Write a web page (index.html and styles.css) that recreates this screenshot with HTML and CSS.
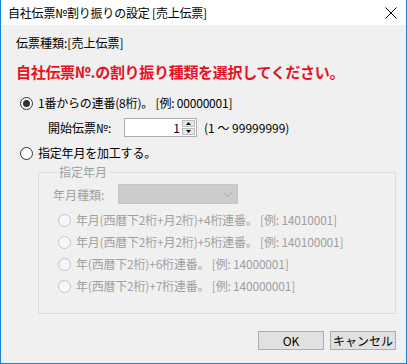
FILE: index.html
```html
<!DOCTYPE html>
<html>
<head>
	<title>自社伝票№割り振りの設定</title>
	<link rel="stylesheet" href="styles.css">
</head>
<body>
	<div class="window">
		<div class="titlebar">
			<span class="title">自社伝票№割り振りの設定 [売上伝票]</span>
			<svg class="close" width="12" height="12" viewBox="0 0 12 12">
				<path d="M0.5 0.5 L11.5 11.5 M11.5 0.5 L0.5 11.5" stroke="#000" stroke-width="1" fill="none"/>
			</svg>
		</div>
		<div class="content">
			<div class="kind">伝票種類:[売上伝票]</div>
			<div class="headline">自社伝票№.の割り振り種類を選択してください。</div>

			<label class="radio-row first">
				<span class="radio checked"></span>
				<span>1番からの連番(8桁)。 [例: 00000001]</span>
			</label>

			<div class="start-row">
				<span class="start-label">開始伝票№:</span>
				<div class="spin">
					<span class="spin-value">1</span>
					<span class="spin-buttons">
						<span class="spin-btn"><svg width="7" height="4" viewBox="0 0 7 4"><path d="M0 4 L3.5 0 L7 4 Z" fill="#000"/></svg></span>
						<span class="spin-btn"><svg width="7" height="4" viewBox="0 0 7 4"><path d="M0 0 L3.5 4 L7 0 Z" fill="#000"/></svg></span>
					</span>
				</div>
				<span class="range">(1 ～ 99999999)</span>
			</div>

			<label class="radio-row second">
				<span class="radio"></span>
				<span>指定年月を加工する。</span>
			</label>

			<fieldset class="group">
				<legend>指定年月</legend>
				<div class="combo-row">
					<span class="combo-label">年月種類:</span>
					<div class="combo">
						<svg width="9" height="5" viewBox="0 0 9 5"><path d="M0.5 0.5 L4.5 4.5 L8.5 0.5" stroke="#aaaaaa" fill="none"/></svg>
					</div>
				</div>
				<label class="radio-row disabled"><span class="radio"></span><span>年月(西暦下2桁+月2桁)+4桁連番。 [例: 14010001]</span></label>
				<label class="radio-row disabled"><span class="radio"></span><span>年月(西暦下2桁+月2桁)+5桁連番。 [例: 140100001]</span></label>
				<label class="radio-row disabled"><span class="radio"></span><span>年(西暦下2桁)+6桁連番。 [例: 14000001]</span></label>
				<label class="radio-row disabled"><span class="radio"></span><span>年(西暦下2桁)+7桁連番。 [例: 140000001]</span></label>
			</fieldset>

			<div class="buttons">
				<button class="btn">OK</button>
				<button class="btn">キャンセル</button>
			</div>
		</div>
	</div>
</body>
</html>
```

FILE: styles.css
```css
html, body {
	margin: 0;
	padding: 0;
	background: #f0f0f0;
}
.window {
	width: 407px;
	height: 364px;
	box-sizing: border-box;
	border: 1px solid #1883d7;
	border-top: none;
	background: #f0f0f0;
	font-family: "Noto Sans CJK JP", "Noto Sans", sans-serif;
	font-size: 12px;
	color: #000;
}
.titlebar {
	height: 25px;
	background: #fff;
	display: flex;
	align-items: center;
	justify-content: space-between;
	padding: 0 9px 0 7px;
}
.title {
	font-size: 12px;
	letter-spacing: -0.2px;
}
.content {
	padding: 0 10px 0 15px;
	display: flex;
	flex-direction: column;
}
.kind {
	margin-top: 10px;
	height: 16px;
	line-height: 16px;
}
.headline {
	margin-top: 10px;
	height: 22px;
	line-height: 22px;
	font-size: 15px;
	font-weight: bold;
	color: #e81123;
	letter-spacing: -0.3px;
}
.radio-row {
	display: flex;
	align-items: center;
	gap: 5px;
	height: 16px;
	line-height: 16px;
	padding-left: 4px;
	letter-spacing: -0.2px;
}
.radio-row.first {
	margin-top: 12px;
}
.radio-row.second {
	margin-top: 8px;
}
.radio {
	width: 13px;
	height: 13px;
	box-sizing: border-box;
	border: 1px solid #333;
	border-radius: 50%;
	background: #fff;
	display: flex;
	align-items: center;
	justify-content: center;
	flex: none;
}
.radio.checked::after {
	content: "";
	width: 7px;
	height: 7px;
	border-radius: 50%;
	background: #333;
}
.start-row {
	margin-top: 6px;
	height: 20px;
	display: flex;
	align-items: center;
	padding-left: 32px;
}
.start-label {
	width: 76px;
}
.spin {
	width: 73px;
	height: 19px;
	box-sizing: border-box;
	border: 1px solid #abadb3;
	background: #fff;
	display: flex;
	align-items: center;
	justify-content: flex-end;
	padding-right: 1px;
}
.spin-value {
	padding-right: 2px;
}
.spin-buttons {
	display: flex;
	flex-direction: column;
	gap: 1px;
}
.spin-btn {
	width: 13px;
	height: 7px;
	box-sizing: border-box;
	background: #e5e5e5;
	border: 1px solid #bcbcbc;
	display: flex;
	align-items: center;
	justify-content: center;
}
.spin-btn svg {
	width: 5px;
	height: 3px;
}
.range {
	margin-left: 7px;
}
.group {
	margin: 3px 0 0 22px;
	width: 358px;
	box-sizing: border-box;
	border: 1px solid #dcdcdc;
	padding: 4px 14px 19px 14px;
	color: #a0a0a0;
}
.group legend {
	padding: 0 2px;
	margin-left: 4px;
	height: 16px;
	line-height: 16px;
	color: #a0a0a0;
}
.combo-row {
	display: flex;
	align-items: center;
	height: 20px;
}
.combo-label {
	width: 65px;
}
.combo {
	width: 120px;
	height: 20px;
	box-sizing: border-box;
	background: #cccccc;
	border: 1px solid #c5c5c5;
	display: flex;
	align-items: center;
	justify-content: flex-end;
	padding-right: 5px;
}
.radio-row.disabled {
	margin-top: 6px;
	padding-left: 5px;
	color: #a0a0a0;
}
.combo-row + .radio-row.disabled {
	margin-top: 8px;
}
.radio-row.disabled .radio {
	border-color: #c4c4c4;
	background: #f7f7f7;
}
.buttons {
	margin-top: 17px;
	display: flex;
	justify-content: flex-end;
	gap: 6px;
}
.btn {
	width: 66px;
	height: 19px;
	box-sizing: border-box;
	background: #e1e1e1;
	border: 1px solid #adadad;
	font-family: "Noto Sans CJK JP", "Noto Sans", sans-serif;
	font-size: 12px;
	line-height: 15px;
	padding: 0;
	color: #000;
}
```
